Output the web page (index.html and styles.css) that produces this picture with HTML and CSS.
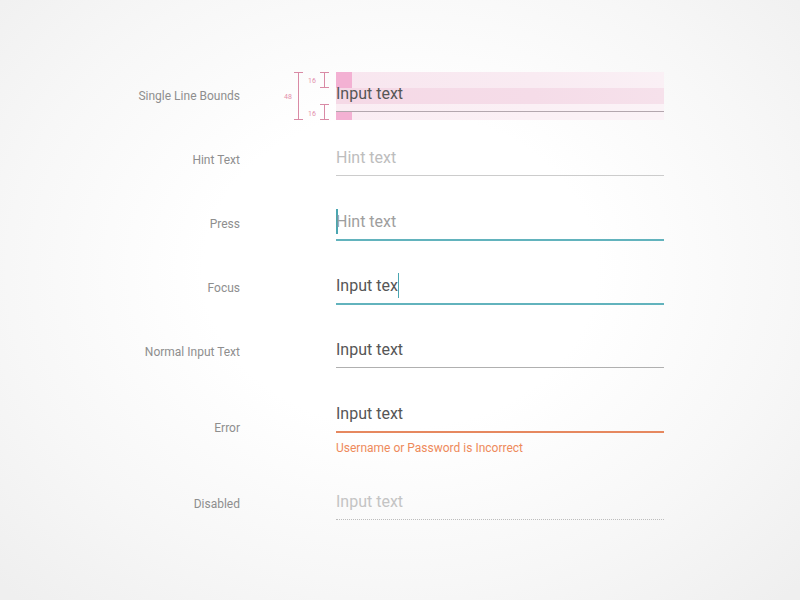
FILE: index.html
```html
<!DOCTYPE html>
<html>
<head>
<meta charset="utf-8">
<link rel="stylesheet" href="styles.css">
</head>
<body>
<main class="sheet">
  <section class="row">
    <div class="label">Single Line Bounds</div>
    <div class="gutter">
      <svg class="measure" width="96" height="48" viewBox="0 0 96 48">
        <g stroke="#d98aa5" stroke-width="1" fill="none">
          <line x1="58.5" y1="0.5" x2="58.5" y2="47.5"/>
          <line x1="54" y1="0.5" x2="63" y2="0.5"/>
          <line x1="54" y1="47.5" x2="63" y2="47.5"/>
          <line x1="84.5" y1="0.5" x2="84.5" y2="15.5"/>
          <line x1="80" y1="0.5" x2="89" y2="0.5"/>
          <line x1="80" y1="15.5" x2="89" y2="15.5"/>
          <line x1="84.5" y1="32.5" x2="84.5" y2="47.5"/>
          <line x1="80" y1="32.5" x2="89" y2="32.5"/>
          <line x1="80" y1="47.5" x2="89" y2="47.5"/>
        </g>
        <g fill="#e38fab" font-family="Roboto, sans-serif" font-size="7" text-anchor="middle">
          <text x="48" y="26.5">48</text>
          <text x="72" y="10.5">16</text>
          <text x="72" y="43.5">16</text>
        </g>
      </svg>
    </div>
    <div class="field bounds">
      <div class="band band-top"></div>
      <div class="band band-mid"></div>
      <div class="band band-bot"></div>
      <div class="sq sq-top"></div>
      <div class="sq sq-bot"></div>
      <div class="input line-bounds"><span class="value normal">Input text</span></div>
    </div>
  </section>

  <section class="row">
    <div class="label">Hint Text</div>
    <div class="gutter"></div>
    <div class="field">
      <div class="input line-hint"><span class="value hint">Hint text</span></div>
    </div>
  </section>

  <section class="row">
    <div class="label">Press</div>
    <div class="gutter"></div>
    <div class="field">
      <div class="input line-active"><span class="value press"><span class="caret caret-lead"></span>Hint text</span></div>
    </div>
  </section>

  <section class="row">
    <div class="label">Focus</div>
    <div class="gutter"></div>
    <div class="field">
      <div class="input line-active"><span class="value normal">Input tex<span class="caret"></span></span></div>
    </div>
  </section>

  <section class="row">
    <div class="label">Normal Input Text</div>
    <div class="gutter"></div>
    <div class="field">
      <div class="input line-normal"><span class="value normal">Input text</span></div>
    </div>
  </section>

  <section class="row row-error">
    <div class="label">Error</div>
    <div class="gutter"></div>
    <div class="field">
      <div class="input line-error"><span class="value normal">Input text</span></div>
      <div class="error-msg">Username or Password is Incorrect</div>
    </div>
  </section>

  <section class="row">
    <div class="label">Disabled</div>
    <div class="gutter"></div>
    <div class="field">
      <div class="input line-disabled"><span class="value disabled">Input text</span></div>
    </div>
  </section>
</main>
</body>
</html>
```

FILE: styles.css
```css
html, body {
  margin: 0;
  padding: 0;
  width: 800px;
  height: 600px;
  overflow: hidden;
}

body {
  font-family: Roboto, "Liberation Sans", sans-serif;
  background: radial-gradient(ellipse 70% 75% at 50% 45%, #ffffff 35%, #f7f7f7 70%, #efefef 100%);
}

.sheet {
  padding-top: 72px;
  display: flex;
  flex-direction: column;
  gap: 16px;
}

.row {
  display: grid;
  grid-template-columns: 240px 96px 328px;
  height: 48px;
  align-items: center;
}

.row-error {
  height: 72px;
}

.label {
  text-align: right;
  font-size: 12px;
  line-height: 16px;
  color: #8e8e8e;
}

.gutter {
  height: 100%;
}

.measure {
  display: block;
}

.field {
  align-self: start;
  position: relative;
  height: 48px;
}

.row-error .field {
  height: 72px;
}

.input {
  position: relative;
  height: 39px;
  display: flex;
  align-items: flex-end;
  box-sizing: content-box;
}

.value {
  font-size: 16px;
  line-height: 20px;
  padding-bottom: 7px;
  white-space: nowrap;
}

.normal { color: #565656; }
.hint { color: #bdbdbd; }
.press { color: #9e9e9e; }
.disabled { color: #c4c4c4; }

.line-bounds { border-bottom: 1px solid #b3a7ae; }
.line-hint { border-bottom: 1px solid #cccccc; }
.line-normal { border-bottom: 1px solid #b0b0b0; }
.line-active { height: 39px; border-bottom: 2px solid #62b3bd; }
.line-error { border-bottom: 2px solid #e6885f; }
.line-disabled { border-bottom: 1px dotted #bdbdbd; }

.caret {
  display: inline-block;
  width: 1.5px;
  height: 25px;
  margin-top: -6px;
  margin-bottom: -4px;
  background: #4aa6b1;
  vertical-align: -3px;
}

.caret-lead {
  margin-right: -1.5px;
}

.error-msg {
  margin-top: 7px;
  font-size: 12px;
  line-height: 16px;
  color: #ee8a5b;
}

/* Single-line bounds overlay */
.band {
  position: absolute;
  left: 0;
  right: 0;
}

.band-top {
  top: 0;
  height: 16px;
  background: linear-gradient(90deg, #f8e6ef 0%, #f9ebf2 60%, #faf0f5 100%);
}

.band-mid {
  top: 16px;
  height: 16px;
  background: linear-gradient(90deg, #f5d9e6 0%, #f5dce8 60%, #f6e1eb 100%);
}

.band-bot {
  top: 32px;
  height: 16px;
  background: linear-gradient(90deg, #faedf3 0%, #fbf0f5 60%, #fbf3f7 100%);
}

.sq {
  position: absolute;
  left: 0;
  width: 16px;
  background: #f3b1d3;
}

.sq-top {
  top: 0;
  height: 16px;
}

.sq-bot {
  top: 40px;
  height: 8px;
}
```
